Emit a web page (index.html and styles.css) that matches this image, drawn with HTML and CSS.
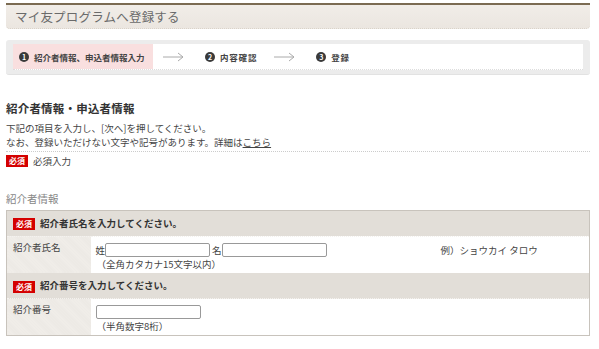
FILE: index.html
```html
<!DOCTYPE html>
<html lang="ja">
<head>
  <meta charset="UTF-8" />
  <title>マイ友プログラムへ登録する</title>
  <link rel="stylesheet" href="styles.css">
</head>
<body>
  <div class="page">
    <!-- タイトル -->
    <div class="page-head">
      <h1>マイ友プログラムへ登録する</h1>
    </div>

    <!-- ステップ -->
    <div class="steps">
      <ol class="steps-inner">
        <li class="step current"><span class="num">1</span>紹介者情報、申込者情報入力</li>
        <li class="arrow"><svg width="21" height="10" viewBox="0 0 21 10"><path d="M0 5H20M15 1L20 5L15 9" fill="none" stroke="#aaa" stroke-width="1"/></svg></li>
        <li class="step"><span class="num">2</span>内容確認</li>
        <li class="arrow"><svg width="21" height="10" viewBox="0 0 21 10"><path d="M0 5H20M15 1L20 5L15 9" fill="none" stroke="#aaa" stroke-width="1"/></svg></li>
        <li class="step"><span class="num">3</span>登録</li>
      </ol>
    </div>

    <h2>紹介者情報・申込者情報</h2>
    <p class="lead">下記の項目を入力し、[次へ]を押してください。<br>なお、登録いただけない文字や記号があります。詳細は<a href="#">こちら</a></p>
    <p class="req-note"><span class="req">必須</span>必須入力</p>

    <h3>紹介者情報</h3>
    <table class="form">
      <tr class="q">
        <th colspan="2"><span class="req">必須</span>紹介者氏名を入力してください。</th>
      </tr>
      <tr>
        <td class="label">紹介者氏名</td>
        <td class="value">
          <div class="line">
            <span>姓</span><input type="text" class="name">
            <span class="mei">名</span><input type="text" class="name">
            <span class="example">例）ショウカイ タロウ</span>
          </div>
          <div class="hint">（全角カタカナ15文字以内）</div>
        </td>
      </tr>
      <tr class="q">
        <th colspan="2"><span class="req">必須</span>紹介番号を入力してください。</th>
      </tr>
      <tr>
        <td class="label">紹介番号</td>
        <td class="value">
          <div class="line"><input type="text" class="code"></div>
          <div class="hint">（半角数字8桁）</div>
        </td>
      </tr>
    </table>
  </div>
</body>
</html>
```

FILE: styles.css
```css
body { margin: 0; background: #fff; color: #444; font-family: "Noto Sans CJK JP", "Noto Sans", sans-serif; font-size: 10px; }
.page { width: 584px; margin: 0 0 0 6px; padding-top: 3px; }

.page-head { border-top: 2px solid #7b6b52; background: linear-gradient(#f1ede8, #ebe6e0); border-bottom: 1px dotted #d6cfc5; border-radius: 0 0 4px 4px; height: 23px; }
.page-head h1 { margin: 0; padding: 0 0 0 9px; font-size: 12.5px; line-height: 23px; font-weight: normal; color: #6a6a6a; letter-spacing: 0.2px; }

.steps { margin-top: 11px; background: #ececec; border-radius: 3px; padding: 4px 7px 4px 7px; border-bottom: 1px solid #e2e2e2; }
.steps-inner { list-style: none; margin: 0; padding: 0; display: flex; align-items: center; height: 25px; background: #fff; border-bottom: 1px dotted #ddd; }
.step { display: flex; align-items: center; height: 100%; font-size: 8.5px; font-weight: bold; color: #444; }
.step.current { background: #f9dfdf; width: 140px; padding-left: 6px; box-sizing: border-box; }
.step + .arrow { margin-left: 17px; }
.step.current + .arrow { margin-left: 10px; }
.step:not(.current) { letter-spacing: 0.8px; }
.num { width: 10px; height: 10px; border-radius: 50%; background: #3a3a3a; color: #fff; font-size: 7px; line-height: 10px; text-align: center; margin-right: 5px; letter-spacing: 0; }
.arrow { display: flex; align-items: center; margin: 0 21px 0 10px; }
.arrow svg { display: block; }

h2 { margin: 26px 0 0; font-size: 11.5px; line-height: 14px; font-weight: bold; color: #333; letter-spacing: 0.2px; }
.lead { margin: 7px 0 0; font-size: 9.5px; line-height: 13.8px; padding-bottom: 1px; border-bottom: 1px dotted #ccc; }
.lead a { color: #444; }
.req-note { margin: 2px 0 0; display: flex; align-items: center; font-size: 9.5px; line-height: 14px; }
.req { display: inline-block; background: #d40000; color: #fff; font-size: 8px; font-weight: bold; line-height: 12px; padding: 0 3px; margin-right: 5px; }

h3 { margin: 24px 0 0; font-size: 10.5px; font-weight: normal; color: #888; line-height: 14px; }

.form { margin-top: 4px; width: 100%; border-collapse: collapse; border: 1px solid #c8c3bc; }
.form th { text-align: left; background: #e2ded8; font-size: 9.5px; font-weight: bold; color: #333; height: 25px; padding: 0 0 0 6px; border-bottom: 1px dotted #f4f2ef; }
.form th .req { vertical-align: middle; }
.form td { vertical-align: top; font-size: 9.5px; }
.label { width: 84px; box-sizing: border-box; background: #efece7; background-image: repeating-linear-gradient(45deg, #f1eeea 0 1px, #ebe8e3 1px 2px); padding: 3px 0 0 6px; height: 37px; }
.value { padding: 6px 0 0 5px; }
.line { display: flex; align-items: center; height: 14px; }
.line input { height: 14px; box-sizing: border-box; border: 1px solid #999; border-radius: 2px; padding: 0; margin: 0; }
.name { width: 105px; }
.code { width: 105px; }
.mei { margin-left: 2px; }
.example { margin-left: 114px; }
.hint { margin: 0 0 0 1px; line-height: 14px; }
```
